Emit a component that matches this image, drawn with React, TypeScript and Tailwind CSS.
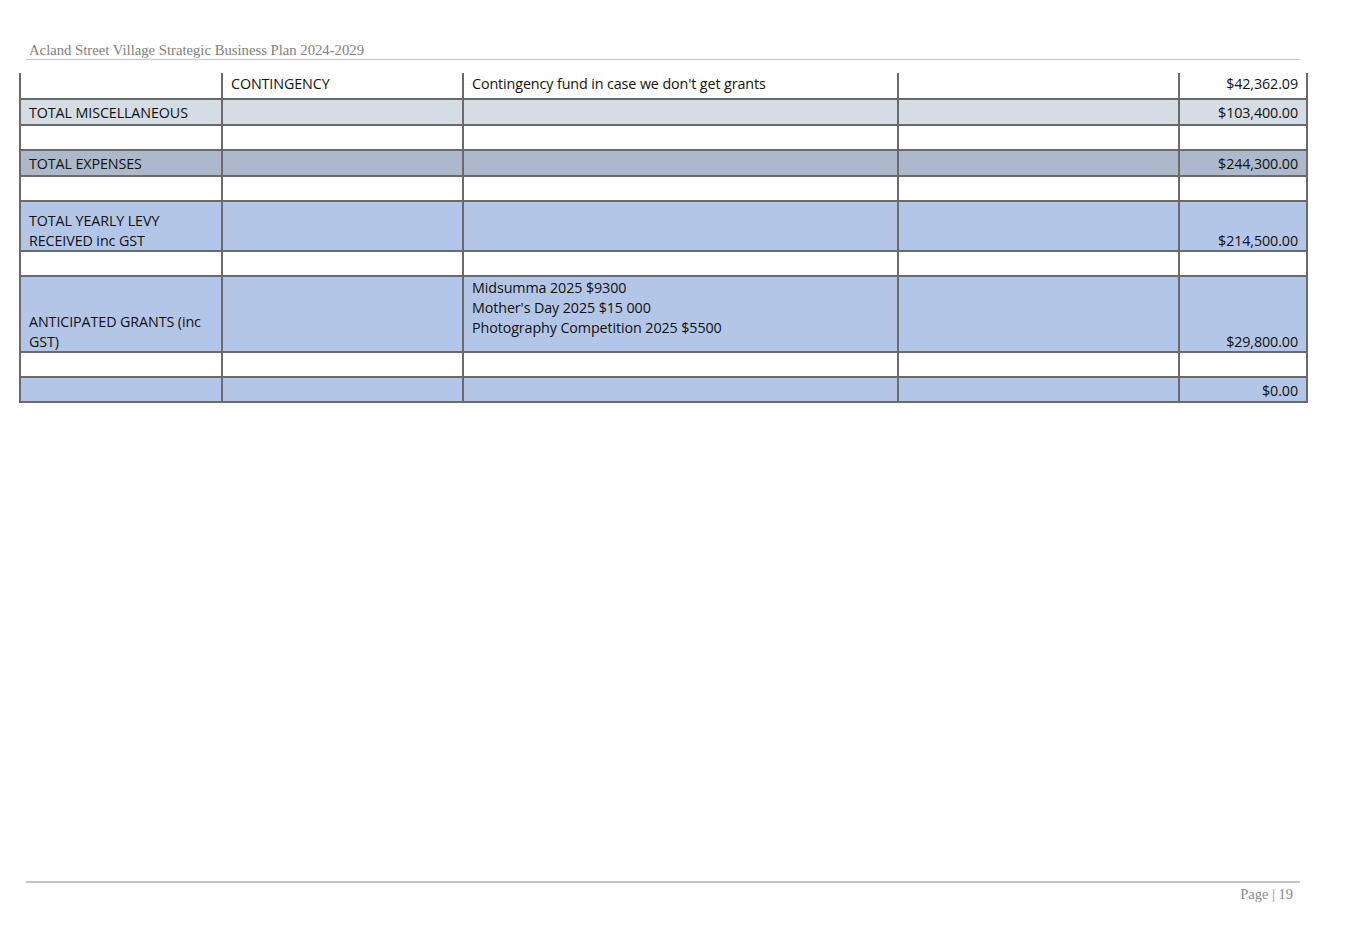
type Row = {
  cells: React.ReactNode[];
  bg: string;
  h: string;
  tall?: boolean;
};

const serif = { fontFamily: '"Liberation Serif", "Times New Roman", serif' };

const rows: Row[] = [
  { cells: ["", "CONTINGENCY", "Contingency fund in case we don't get grants", "", "$42,362.09"], bg: "bg-white", h: "h-[26px]" },
  { cells: ["TOTAL MISCELLANEOUS", "", "", "", "$103,400.00"], bg: "bg-[#d6dce4]", h: "h-[26px]" },
  { cells: ["", "", "", "", ""], bg: "bg-white", h: "h-[25px]" },
  { cells: ["TOTAL EXPENSES", "", "", "", "$244,300.00"], bg: "bg-[#adb9ca]", h: "h-[26px]" },
  { cells: ["", "", "", "", ""], bg: "bg-white", h: "h-[25px]" },
  {
    cells: [
      <>TOTAL YEARLY LEVY<br />RECEIVED inc GST</>,
      "",
      "",
      "",
      "$214,500.00",
    ],
    bg: "bg-[#b4c6e7]",
    h: "h-[50px]",
    tall: true,
  },
  { cells: ["", "", "", "", ""], bg: "bg-white", h: "h-[25px]" },
  {
    cells: [
      <>ANTICIPATED GRANTS (inc<br />GST)</>,
      "",
      <>Midsumma 2025 $9300<br />Mother's Day 2025 $15 000<br />Photography Competition 2025 $5500</>,
      "",
      "$29,800.00",
    ],
    bg: "bg-[#b4c6e7]",
    h: "h-[76px]",
    tall: true,
  },
  { cells: ["", "", "", "", ""], bg: "bg-white", h: "h-[25px]" },
  { cells: ["", "", "", "", "$0.00"], bg: "bg-[#b4c6e7]", h: "h-[25px]" },
];

const colWidths = ["w-[202px]", "w-[241px]", "w-[435px]", "w-[281px]", "w-[128px]"];

export default function App() {
  return (
    <div className="w-[1345px] h-[941px] bg-white flex flex-col" style={{ fontFamily: '"Open Sans", "Lato", sans-serif' }}>
      {/* Header */}
      <div className="pt-[41px] pl-[26px] pr-[45px]">
        <div className="pl-[3px] text-[14.7px] leading-[18px] text-[#808080]" style={serif}>
          Acland Street Village Strategic Business Plan 2024-2029
        </div>
        <div className="h-[1px] bg-[#c4c4c4]" />
      </div>

      {/* Table */}
      <div className="pt-[13px] pl-[19px]">
        <table className="border-collapse table-fixed w-[1289px] text-[14.3px] leading-[20px] text-[#111] tracking-[-0.1px]">
          <colgroup>
            {colWidths.map((w, i) => (
              <col key={i} className={w} />
            ))}
          </colgroup>
          <tbody>
            {rows.map((row, ri) => (
              <tr key={ri} className={`${row.bg} ${row.h}`}>
                {row.cells.map((c, ci) => {
                  const bottom = row.tall && ci !== 2;
                  const top = ri === 0 ? "pt-[1px]" : row.tall ? "pt-[1px]" : "pt-[3px]";
                  return (
                    <td
                      key={ci}
                      className={`border-2 border-[#6a6a6a] px-[8px] ${ri === 0 ? "border-t-0" : ""} ${
                        bottom ? "align-bottom pt-0 pb-0" : `align-top ${top} pb-0`
                      } ${ci === 4 ? "text-right" : "text-left"}`}
                    >
                      {bottom ? <div className="translate-y-[1px]">{c}</div> : c}
                    </td>
                  );
                })}
              </tr>
            ))}
          </tbody>
        </table>
      </div>

      <div className="flex-1" />

      {/* Footer */}
      <div className="pl-[26px] pr-[45px] pb-[38px]">
        <div className="h-[2px] bg-[#c4c4c4]" />
        <div className="mt-[2px] pr-[7px] text-right text-[14.5px] leading-[18px] text-[#8a8a8a]" style={serif}>
          Page | 19
        </div>
      </div>
    </div>
  );
}
